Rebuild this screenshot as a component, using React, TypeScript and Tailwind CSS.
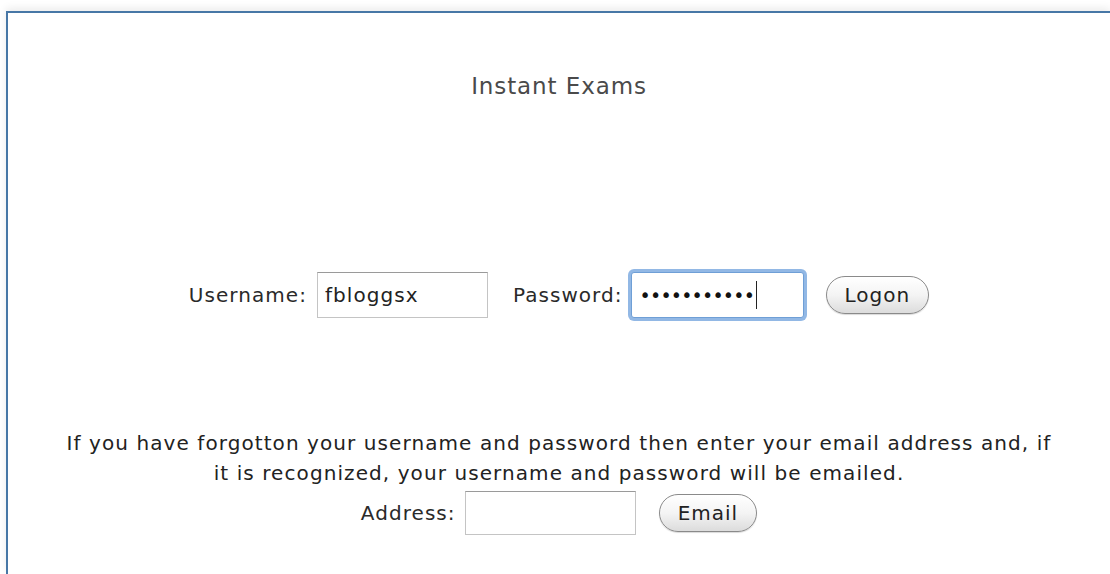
import { useState } from "react";

const font = { fontFamily: '"DejaVu Sans", Verdana, sans-serif' };

function AquaButton({ children }: { children: React.ReactNode }) {
    return (
        <button
            type="button"
            className="h-[38px] rounded-full border border-[#8a8a8a] bg-gradient-to-b from-white via-[#f4f4f4] to-[#dcdcdc] px-[18px] text-[20px] tracking-[1px] text-[#222] shadow-[inset_0_1px_2px_rgba(255,255,255,0.9),0_1px_1px_rgba(0,0,0,0.15)]"
            style={font}
        >
            {children}
        </button>
    );
}

function App() {
    const [username, setUsername] = useState("fbloggsx");
    const [address, setAddress] = useState("");

    return (
        <div className="flex h-[574px] w-full overflow-hidden bg-white pl-[6px] pt-[11px]" style={font}>
            <div className="flex flex-1 flex-col items-center border-l-2 border-t-2 border-[#4777a6] shadow-[0_-3px_8px_rgba(0,0,0,0.08)]">
                <h1 className="mt-[59px] text-[23px] leading-[28px] tracking-[0.9px] text-[#4a4a4a]">Instant Exams</h1>

                {/* logon row */}
                <div className="mt-[172px] flex items-center text-[20px] tracking-[1.05px] text-[#2a2a2a]">
                    <label htmlFor="username">Username:</label>
                    <input
                        id="username"
                        value={username}
                        onChange={(e) => setUsername(e.target.value)}
                        className="ml-[10px] h-[46px] w-[171px] border border-[#c4c4c4] border-t-[#9a9a9a] bg-white px-[7px] text-[20px] tracking-[1.05px] text-[#222] outline-none"
                        style={font}
                    />
                    <label className="ml-[25px]">Password:</label>
                    <div className="ml-[8px] flex h-[46px] w-[173px] items-center rounded-[3px] border border-[#6f9fd6] bg-white pl-[8px] shadow-[0_0_0_3px_rgba(110,160,220,0.75)]">
                        <span className="text-[19px] tracking-[-0.8px] text-[#111]">•••••••••••</span>
                        <span className="ml-[2px] h-[28px] w-px bg-[#222]" />
                    </div>
                    <div className="ml-[22px]">
                        <AquaButton>Logon</AquaButton>
                    </div>
                </div>

                {/* forgotten details */}
                <p className="mt-[110px] w-[1060px] text-center text-[20px] leading-[30px] tracking-[1.08px] text-[#222]">
                    If you have forgotton your username and password then enter your email address and, if
                    <br />
                    it is recognized, your username and password will be emailed.
                </p>
                <div className="mt-[3px] flex items-center text-[20px] tracking-[1.05px] text-[#2a2a2a]">
                    <label htmlFor="address">Address:</label>
                    <input
                        id="address"
                        value={address}
                        onChange={(e) => setAddress(e.target.value)}
                        className="ml-[9px] h-[44px] w-[171px] border border-[#c4c4c4] border-t-[#9a9a9a] bg-white px-[7px] text-[20px] outline-none"
                        style={font}
                    />
                    <div className="ml-[23px]">
                        <AquaButton>Email</AquaButton>
                    </div>
                </div>
            </div>
        </div>
    );
}

export default App;
